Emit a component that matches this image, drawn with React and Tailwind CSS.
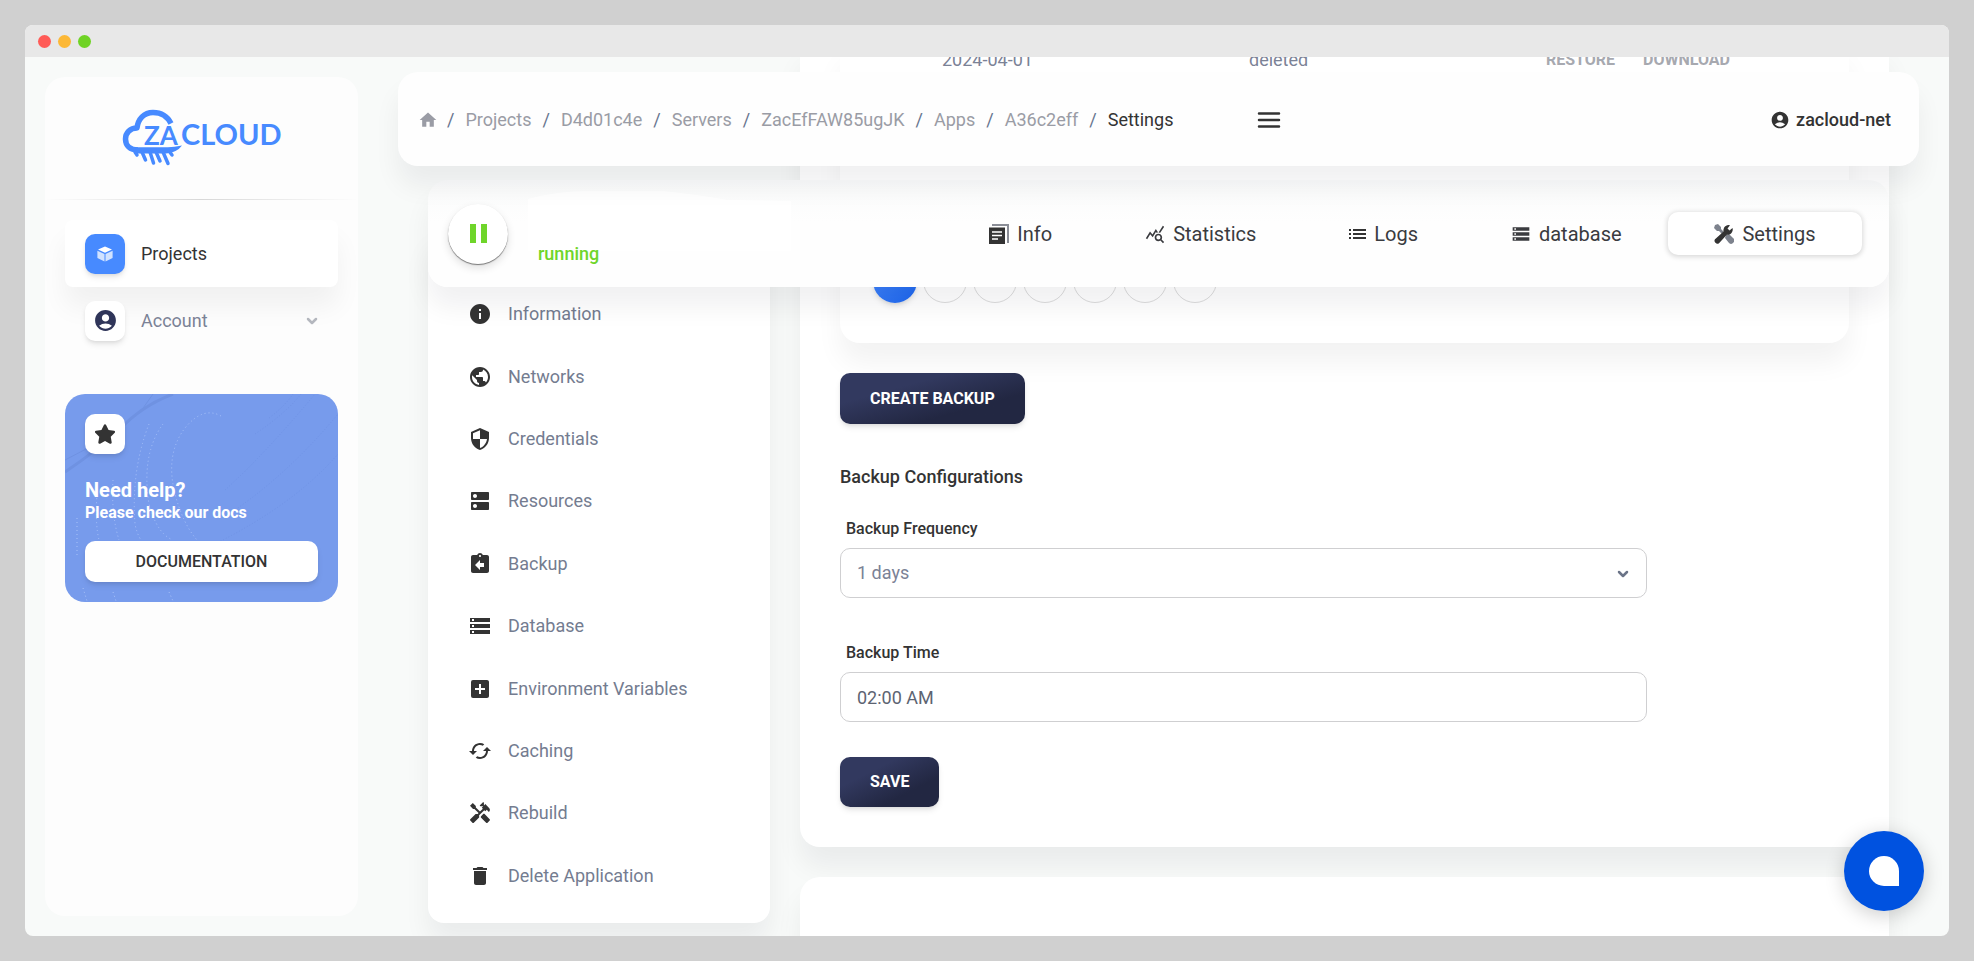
import React from 'react';
import { FaStar } from 'react-icons/fa6';
import {
  MdAccountCircle,
  MdAddBox,
  MdAssignmentReturn,
  MdCached,
  MdDelete,
  MdDns,
  MdHandyman,
  MdHome,
  MdInfo,
  MdPublic,
  MdQueryStats,
  MdSecurity,
  MdStorage,
} from 'react-icons/md';

const LogoIcon = () => (
  <svg width="160" height="60" viewBox="0 0 160 60" role="img" aria-label="ZA Cloud">
    <path
      d="M49 14.500C45 6.500 38 3.500 31 3.500C22 3.500 16 10 15 19C8 19 3.500 24 3.500 30C3.500 36.500 8 41 16 41"
      fill="none"
      stroke="#478aff"
      strokeWidth="5.500"
      strokeLinejoin="round"
    />
    <path d="M13 38.300H46Q52 38.300 60 36.500Q55 43.500 44 44.500H14Z" fill="#478aff" />
    <g stroke="#478aff" strokeWidth="3.500" strokeLinecap="round">
      <path d="M13 43L15 46M20 43L23.500 51M28 43L31.500 54M34 43L38 52M41 43L46 54.500M47 42L50 46" />
    </g>
    <g fill="#478aff" fontFamily="Lato, sans-serif" fontWeight="700">
      <text x="22" y="36" fontSize="26">ZA</text>
      <text x="59" y="36" fontSize="29">CLOUD</text>
    </g>
  </svg>
);

const CubeIcon = () => (
  <svg width="16" height="16" viewBox="0 0 16 16" fill="#fff">
    <path d="M8 0.500L15 3.500L8 6.800L1 3.500Z" />
    <path d="M0.400 4.800L7.500 8V15.500L0.400 12Z" opacity="0.75" />
    <path d="M15.600 4.800L8.500 8V15.500L15.600 12Z" opacity="0.75" />
  </svg>
);

const DocsIcon = () => (
  <svg width="20" height="20" viewBox="0 0 20 20">
    <path d="M3 0H20V19H18V2H3Z" fill="#8a8d96" />
    <path d="M0 3.500H16V20H0Z" fill="#333" />
    <path d="M3 8H13M3 11.500H13M3 15H9" stroke="#fff" strokeWidth="1.500" />
  </svg>
);

const LogsIcon = () => (
  <svg width="17" height="10" viewBox="0 0 17 10" fill="#333">
    <path d="M0 0H2V2H0ZM4 0H17V2H4ZM0 4H2V6H0ZM4 4H17V6H4ZM0 8H2V10H0ZM4 8H17V10H4Z" />
  </svg>
);

const ToolsIcon = () => (
  <svg width="20" height="20" viewBox="0 0 20 20">
    <path d="M1 1L4 0L7 3V5L10 8L8 10L5 7H3L0 4ZM12 11L15 10L19 14A3 3 0 0 1 15 19L11 14Z" fill="#7d828d" />
    <path d="M18.500 4L15.500 6.500L13.500 4.500L16 1.300A5.200 5.200 0 0 0 9.600 7.600L1 15.200A2.900 2.900 0 0 0 5 19.200L12.800 10.700A5.200 5.200 0 0 0 18.500 4Z" fill="#333" />
  </svg>
);

const Chevron = ({ className }) => (
  <svg className={className} width="12" height="8" viewBox="0 0 12 8" fill="none" stroke="currentColor" strokeWidth="2.500" strokeLinecap="round" strokeLinejoin="round">
    <path d="M2 2L6 6L10 2" />
  </svg>
);

const CardWaves = () => (
  <svg className="absolute inset-0 h-full w-full" viewBox="0 0 273 208" preserveAspectRatio="none" fill="none">
    <path d="M0 78Q30 58 54 36Q76 12 108 0" stroke="#6f92e2" strokeWidth="3" />
    <path d="M0 66Q40 46 66 26Q80 14 88 0" stroke="#6f92e2" />
    <path d="M160 96Q200 60 250 0M158 124Q220 84 273 20M150 150Q230 110 273 60M204 24Q220 12 228 0M190 40Q220 20 236 0" stroke="#7093e4" strokeDasharray="1 2" />
    <g stroke="#a9c2f8" strokeDasharray="1 3">
      <path d="M156 22Q138 12 120 34Q100 60 110 100Q118 130 132 146" />
      <path d="M98 30Q76 60 84 110Q92 140 108 146" />
      <path d="M84 30Q66 76 70 130Q72 140 76 146" />
      <path d="M48 86Q46 120 54 146M32 100Q30 130 34 146M12 124V162M18 194L22 207M48 198L51 207M104 198L108 207" />
    </g>
  </svg>
);

const breadcrumbs = ['Projects', 'D4d01c4e', 'Servers', 'ZacEfFAW85ugJK', 'Apps', 'A36c2eff'];

const tabs = [
  { label: 'Info', icon: <DocsIcon /> },
  { label: 'Statistics', icon: <MdQueryStats size={20} /> },
  { label: 'Logs', icon: <LogsIcon /> },
  { label: 'database', icon: <MdStorage size={20} /> },
  { label: 'Settings', icon: <ToolsIcon />, active: true },
];

const menuItems = [
  { label: 'Information', Icon: MdInfo },
  { label: 'Networks', Icon: MdPublic },
  { label: 'Credentials', Icon: MdSecurity },
  { label: 'Resources', Icon: MdDns },
  { label: 'Backup', Icon: MdAssignmentReturn },
  { label: 'Database', Icon: MdStorage },
  { label: 'Environment Variables', Icon: MdAddBox },
  { label: 'Caching', Icon: MdCached },
  { label: 'Rebuild', Icon: MdHandyman },
  { label: 'Delete Application', Icon: MdDelete },
];

const Sidebar = () => (
  <aside className="my-5 ml-5 w-[313px] shrink-0 rounded-[20px] bg-[#fdfdfd]">
    <div className="flex justify-center pt-8">
      <LogoIcon />
    </div>
    <div className="mt-[30px] h-px bg-gradient-to-r from-transparent via-[#d8d8d8] to-transparent" />
    <nav className="mt-5 px-5">
      <a href="#projects" className="flex h-[67px] items-center rounded-lg bg-white px-5 text-lg text-[#333] shadow-[0_20px_27px_rgba(0,0,0,0.05)]">
        <span className="mr-4 flex h-10 w-10 items-center justify-center rounded-[10px] bg-[#478aff] shadow-md">
          <CubeIcon />
        </span>
        Projects
      </a>
      <a href="#account" className="flex h-[67px] items-center px-5 text-lg text-[#7b8296]">
        <span className="mr-4 flex h-10 w-10 items-center justify-center rounded-[10px] bg-white text-[#2f3559] shadow-md">
          <MdAccountCircle size={25} />
        </span>
        Account
        <Chevron className="ml-auto text-[#b4b7be]" />
      </a>
    </nav>
    <div className="relative mx-5 mt-10 overflow-hidden rounded-[20px] bg-[#779bec] p-5">
      <CardWaves />
      <div className="relative">
        <div className="flex h-10 w-10 items-center justify-center rounded-[10px] bg-white text-[#333] shadow-md">
          <FaStar size={22} />
        </div>
        <h6 className="mt-[22px] text-xl font-bold text-white">Need help?</h6>
        <p className="text-base leading-[18px] font-bold text-white">Please check our docs</p>
        <button type="button" className="mt-[19px] h-[41px] w-full rounded-[10px] bg-white text-base font-medium text-[#333] shadow-md">
          DOCUMENTATION
        </button>
      </div>
    </div>
  </aside>
);

const TopBar = () => (
  <header className="absolute top-[15px] right-[30px] left-10 z-20 flex h-[94px] items-center rounded-[20px] bg-[#fefefe] pt-0.5 pr-7 pl-5 text-lg shadow-[0_20px_27px_rgba(10,10,30,0.06)]">
    <nav className="flex items-center gap-[11px] text-[#9a9ca5]" aria-label="Breadcrumb">
      <a href="#home" aria-label="Home" className="-mr-0.5">
        <MdHome size={20} />
      </a>
      {breadcrumbs.map((crumb) => (
        <React.Fragment key={crumb}>
          <span className="text-[#67748e]">/</span>
          <a href={`#${crumb}`}>{crumb}</a>
        </React.Fragment>
      ))}
      <span className="text-[#67748e]">/</span>
      <span className="text-[#333]">Settings</span>
    </nav>
    <button type="button" aria-label="Toggle menu" className="ml-[84px]">
      <svg width="24" height="16" viewBox="0 0 24 16" stroke="#333" strokeWidth="2.500" strokeLinecap="round">
        <path d="M2 1.500H22M2 8H22M2 14.500H22" />
      </svg>
    </button>
    <a href="#user" className="ml-auto flex items-center gap-1.5 font-medium text-[#333]">
      <MdAccountCircle size={20} />
      zacloud-net
    </a>
  </header>
);

const AppBar = () => (
  <div className="absolute top-[123px] right-[60px] left-[70px] z-10 flex h-[107px] items-center justify-between rounded-[20px] bg-gradient-to-b from-[#fafbfb] to-[#fefefe] to-40% pr-[27px] pl-5 shadow-[0_20px_27px_rgba(10,10,30,0.06)]">
    {/* App title plate */}
    <svg className="absolute top-[11px] left-[100px]" width="263" height="60" viewBox="0 0 263 60" fill="#fff">
      <path d="M0 8Q30 0 60 0H135Q165 3 200 9L263 10V60H0Z" />
    </svg>
    <div className="relative flex items-center gap-[30px]">
      <button type="button" aria-label="Pause" className="flex h-[60px] w-[60px] items-center justify-center gap-[5px] rounded-full bg-white shadow-[0_1px_1px_#777,0_4px_8px_rgba(0,0,0,0.12)]">
        <span className="h-[19px] w-1.5 bg-[#6fd52a]" />
        <span className="h-[19px] w-1.5 bg-[#6fd52a]" />
      </button>
      <span className="pt-10 text-lg font-medium text-[#6fd52a]">running</span>
    </div>
    <nav className="flex w-[65%] text-xl text-[#3a3b3f]">
      {tabs.map((tab) => (
        <a
          key={tab.label}
          href={`#${tab.label}`}
          className={
            tab.active
              ? 'flex h-[43px] flex-auto items-center justify-center gap-2 rounded-[10px] bg-white shadow-[0_1px_5px_1px_rgba(0,0,0,0.15)]'
              : 'flex h-[43px] flex-auto items-center justify-center gap-2'
          }
        >
          {tab.icon}
          {tab.label}
        </a>
      ))}
    </nav>
  </div>
);

const SideMenu = () => (
  <nav className="mt-[180px] w-[342px] shrink-0 rounded-2xl bg-white pt-[57px] pb-4 shadow-[0_20px_27px_rgba(10,10,30,0.06)]">
    <ul className="grid h-[624px] auto-rows-fr px-10">
      {menuItems.map(({ label, Icon }) => (
        <li key={label}>
          <a href={`#${label}`} className="flex h-full items-center gap-4 text-lg text-[#747c90]">
            <Icon size={24} className="text-[#333]" />
            {label}
          </a>
        </li>
      ))}
    </ul>
  </nav>
);

const BackupTable = () => (
  <div className="rounded-b-[20px] bg-white pb-10 shadow-[0_20px_27px_rgba(0,0,0,0.05)]">
    <table className="w-full table-fixed text-left">
      <tbody>
        <tr className="text-lg text-[#7b8296]">
          <td className="w-[409px] pl-[102px]">2024-04-01</td>
          <td className="w-[297px]">deleted</td>
          <td className="text-base font-bold text-[#a7a9b0]">
            <button type="button" className="mr-7">RESTORE</button>
            <button type="button">DOWNLOAD</button>
          </td>
        </tr>
      </tbody>
    </table>
    <div className="mt-[185px] flex gap-1.5 pl-[33px]">
      <button type="button" aria-label="Page 1" className="h-11 w-11 rounded-full bg-gradient-to-br from-[#478aff] to-[#1b65ee] shadow-md" />
      {[2, 3, 4, 5, 6, 7].map((page) => (
        <button key={page} type="button" aria-label={`Page ${page}`} className="h-11 w-11 rounded-full border border-[#dcdcdc]" />
      ))}
    </div>
  </div>
);

const BackupPanel = () => (
  <section className="min-w-0 flex-1">
    <div className="rounded-b-[20px] bg-white px-10 pb-10 shadow-[0_20px_27px_rgba(10,10,30,0.06)]">
      <BackupTable />
      <button type="button" className="mt-[30px] h-[51px] rounded-[10px] bg-gradient-to-br from-[#32395f] from-30% to-[#222742] to-70% px-[30px] text-base font-bold text-white shadow-md">
        CREATE BACKUP
      </button>
      <h5 className="mt-[39px] text-lg leading-[27px] font-medium text-[#333]">Backup Configurations</h5>
      <form onSubmit={(e) => e.preventDefault()}>
        <label htmlFor="frequency" className="mt-7 mb-2 ml-1.5 block text-base leading-[22px] font-medium text-[#333]">
          Backup Frequency
        </label>
        <div className="relative w-4/5">
          <select id="frequency" className="h-[50px] w-full appearance-none rounded-[10px] border border-[#cfcfd1] bg-white px-4 text-lg text-[#7b8296]">
            <option>1 days</option>
          </select>
          <Chevron className="pointer-events-none absolute top-[22px] right-[18px] text-[#6b7488]" />
        </div>
        <label htmlFor="time" className="mt-11 mb-2 ml-1.5 block text-base leading-[22px] font-medium text-[#333]">
          Backup Time
        </label>
        <input id="time" type="text" defaultValue="02:00 AM" className="h-[50px] w-4/5 rounded-[10px] border border-[#cfcfd1] bg-white px-4 text-lg text-[#5d6472]" />
        <button type="submit" className="mt-[35px] block h-[50px] rounded-[10px] bg-gradient-to-br from-[#32395f] from-30% to-[#222742] to-70% px-[30px] text-base font-bold text-white shadow-md">
          SAVE
        </button>
      </form>
    </div>
    <div className="mt-[30px] h-40 rounded-t-[20px] bg-white shadow-[0_20px_27px_rgba(10,10,30,0.06)]" />
  </section>
);

const App = () => {
  return (
    <div className="h-screen bg-[#d0d0d0] p-[25px] font-[Roboto,sans-serif]">
      <div className="relative flex h-full flex-col overflow-hidden rounded-lg bg-[#f8faf9]">
        {/* Window title bar */}
        <div className="flex h-8 shrink-0 items-center gap-[7px] bg-[#e8e8e8] px-[13px]">
          <span className="h-[13px] w-[13px] rounded-full bg-[#ff5b57]" />
          <span className="h-[13px] w-[13px] rounded-full bg-[#fcb836]" />
          <span className="h-[13px] w-[13px] rounded-full bg-[#6fd325]" />
        </div>

        <div className="flex min-h-0 flex-1">
          <Sidebar />
          <main className="relative min-w-0 flex-1 overflow-hidden">
            <TopBar />
            <AppBar />
            {/* Scrolled page content */}
            <div className="-mt-[11px] flex items-start gap-[30px] pr-[60px] pl-[70px]">
              <SideMenu />
              <BackupPanel />
            </div>
          </main>
        </div>

        {/* Chat launcher */}
        <button type="button" aria-label="Open chat" className="absolute right-[25px] bottom-[25px] z-30 flex h-20 w-20 items-center justify-center rounded-full bg-[#0052e0] shadow-[0_4px_20px_rgba(0,0,0,0.2)]">
          <span className="h-[30px] w-[30px] rounded-full rounded-br-none bg-white" />
        </button>
      </div>
    </div>
  );
};

export default App;
